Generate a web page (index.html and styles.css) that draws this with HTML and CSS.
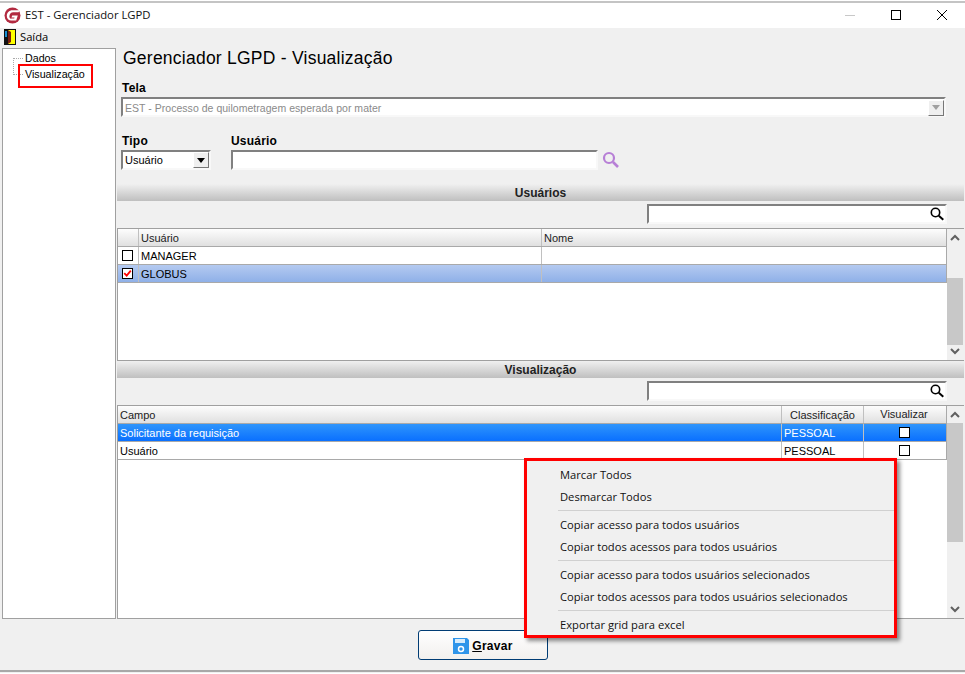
FILE: index.html
```html
<!DOCTYPE html>
<html lang="pt-BR">
<head>
<meta charset="utf-8">
<title>EST - Gerenciador LGPD</title>
<link rel="stylesheet" href="styles.css">
</head>
<body>
<div class="window">
  <header class="titlebar">
    <svg class="logo" width="17" height="17" viewBox="0 0 17 17"><circle cx="8.500" cy="8.500" r="8" fill="#b22a40"/><path d="M16 3.200H8.500C5 3.200 2.800 5.700 2.800 8.800c0 2.800 1.800 4.800 4.400 4.800h5l1.600-5.200H8.200l-.7 2.100h3l-.3 1.100H7.800C6 12.200 5.200 10.500 5.400 9 5.700 6.800 7 5.200 9.200 5.200h5.300z" fill="#fff"/></svg>
    <span class="app-title">EST - Gerenciador LGPD</span>
    <div class="win-buttons">
      <svg width="12" height="12" viewBox="0 0 12 12"><path d="M1 6.500h10" stroke="#c8c8c8"/></svg>
      <svg width="12" height="12" viewBox="0 0 12 12"><rect x="1.500" y="1.500" width="9" height="9" fill="none" stroke="#000"/></svg>
      <svg width="12" height="12" viewBox="0 0 12 12"><path d="M1 1l10 10M11 1L1 11" stroke="#000"/></svg>
    </div>
  </header>
  <nav class="menubar">
    <svg width="12" height="16" viewBox="0 0 12 16"><rect width="12" height="16" fill="#111"/><rect x="4" y="1" width="7" height="14" fill="#ffff00"/><path d="M4 1l3 2v10l-3 2z" fill="#7a1d10"/><rect x="1" y="2" width="2" height="6" fill="#1b8fd0"/></svg>
    <span>Saída</span>
  </nav>
  <div class="content">
    <aside class="tree">
      <div class="tree-lines"></div>
      <div class="tree-item">Dados</div>
      <div class="tree-item">Visualização</div>
    </aside>
    <main class="main">
      <div class="form">
        <h1>Gerenciador LGPD - Visualização</h1>
        <label class="lbl lbl-tela">Tela</label>
        <div class="field field-tela">
          <span>EST - Processo de quilometragem esperada por mater</span>
          <span class="drop disabled"><i></i></span>
        </div>
        <div class="form-row">
          <div class="col-tipo">
            <label class="lbl">Tipo</label>
            <div class="field field-tipo"><span>Usuário</span><span class="drop"><i></i></span></div>
          </div>
          <div class="col-user">
            <label class="lbl">Usuário</label>
            <div class="user-line">
              <div class="field field-user"></div>
              <svg width="20" height="20" viewBox="0 0 20 20"><circle cx="8" cy="8" r="5" fill="none" stroke="#b77fd6" stroke-width="2.200"/><path d="M12 12l5 5" stroke="#b77fd6" stroke-width="2.600"/></svg>
            </div>
          </div>
        </div>
      </div>

      <div class="band">Usuários</div>
      <div class="search-row">
        <div class="search"><svg width="16" height="16" viewBox="0 0 16 16"><circle cx="6.500" cy="6.500" r="4.200" fill="none" stroke="#000" stroke-width="1.600"/><path d="M9.800 9.800l4.500 4" stroke="#000" stroke-width="2"/></svg></div>
      </div>
      <section class="grid grid-users">
        <div class="grid-body">
          <div class="row head">
            <div class="c c-check"></div><div class="c c-user">Usuário</div><div class="c c-name">Nome</div>
          </div>
          <div class="row">
            <div class="c c-check"><span class="box"></span></div><div class="c c-user">MANAGER</div><div class="c c-name"></div>
          </div>
          <div class="row sel-soft">
            <div class="c c-check"><span class="box checked"><svg width="11" height="11" viewBox="0 0 11 11"><path d="M1.500 5l3 3 5-6" fill="none" stroke="#f00" stroke-width="2.200"/></svg></span></div><div class="c c-user">GLOBUS</div><div class="c c-name"></div>
          </div>
        </div>
        <div class="scrollbar sb-users">
          <svg class="arrow" width="16" height="17" viewBox="0 0 16 17"><path d="M4 11l4-4 4 4" fill="none" stroke="#606060" stroke-width="2"/></svg>
          <div class="track"><div class="thumb"></div></div>
          <svg class="arrow" width="16" height="17" viewBox="0 0 16 17"><path d="M4 6l4 4 4-4" fill="none" stroke="#606060" stroke-width="2"/></svg>
        </div>
      </section>

      <div class="band">Visualização</div>
      <div class="search-row">
        <div class="search"><svg width="16" height="16" viewBox="0 0 16 16"><circle cx="6.500" cy="6.500" r="4.200" fill="none" stroke="#000" stroke-width="1.600"/><path d="M9.800 9.800l4.500 4" stroke="#000" stroke-width="2"/></svg></div>
      </div>
      <section class="grid grid-view">
        <div class="grid-body">
          <div class="row head">
            <div class="c c-campo">Campo</div><div class="c c-class center">Classificação</div><div class="c c-vis center">Visualizar</div>
          </div>
          <div class="row sel-strong">
            <div class="c c-campo">Solicitante da requisição</div><div class="c c-class">PESSOAL</div><div class="c c-vis center"><span class="box"></span></div>
          </div>
          <div class="row">
            <div class="c c-campo">Usuário</div><div class="c c-class">PESSOAL</div><div class="c c-vis center"><span class="box"></span></div>
          </div>
        </div>
        <div class="scrollbar sb-view">
          <svg class="arrow" width="16" height="17" viewBox="0 0 16 17"><path d="M4 11l4-4 4 4" fill="none" stroke="#606060" stroke-width="2"/></svg>
          <div class="track"><div class="thumb"></div></div>
          <svg class="arrow" width="16" height="17" viewBox="0 0 16 17"><path d="M4 6l4 4 4-4" fill="none" stroke="#606060" stroke-width="2"/></svg>
        </div>
      </section>
    </main>
  </div>
  <footer class="footer">
    <button class="save">
      <svg width="16" height="16" viewBox="0 0 16 16"><path d="M0 0h14l2 2v14H0z" fill="#2f95ea"/><rect x="2" y="1" width="10" height="4" fill="#d8ecfb"/><circle cx="8" cy="11" r="2.500" fill="none" stroke="#fff" stroke-width="1.500"/></svg>
      <span><u>G</u>ravar</span>
    </button>
  </footer>
  <div class="annot-tree"></div>
  <div class="menu">
    <div class="mi">Marcar Todos</div>
    <div class="mi">Desmarcar Todos</div>
    <hr>
    <div class="mi">Copiar acesso para todos usuários</div>
    <div class="mi">Copiar todos acessos para todos usuários</div>
    <hr>
    <div class="mi">Copiar acesso para todos usuários selecionados</div>
    <div class="mi">Copiar todos acessos para todos usuários selecionados</div>
    <hr>
    <div class="mi">Exportar grid para excel</div>
  </div>
</div>
</body>
</html>
```
FILE: styles.css
```css
* { box-sizing: border-box; }
html, body { margin: 0; padding: 0; }
body { width: 965px; height: 674px; overflow: hidden; background: #fff; font-family: "Liberation Sans", sans-serif; font-size: 11px; color: #000; }
.window { position: relative; width: 965px; height: 674px; display: flex; flex-direction: column; padding: 2px 0 3px 2px; background: #f0f0f0; border-bottom: 1px solid #fff; }
.window::before { content: ""; position: absolute; left: 0; right: 0; top: 0; height: 3px; background: linear-gradient(#fff 33%, #c4c4c4 33%); }
.window::after { content: ""; position: absolute; left: 0; right: 0; bottom: 1px; height: 2px; background: #a8a8a8; }

.titlebar { height: 26px; margin-left: -2px; background: #fff; display: flex; align-items: center; padding: 0 0 1px 4px; font-family: "Open Sans", sans-serif; font-size: 11.300px; }
.logo { margin: 1px 4px 0 0; }
.app-title { color: #111; }
.win-buttons { margin: 1px 0 0 auto; display: flex; gap: 34px; padding-right: 17px; }

.menubar { height: 20px; display: flex; align-items: center; gap: 4px; padding: 0 0 2px 2px; font-family: "Open Sans", sans-serif; font-size: 11.200px; }
.menubar span { margin-bottom: 2px; }

.content { height: 571px; display: flex; }
.tree { position: relative; width: 114px; height: 571px; background: #fff; border: 1px solid #a0a0a0; padding-top: 2px; font-size: 10.700px; }
.tree-item { height: 16px; line-height: 14px; padding-left: 22px; }
.tree-lines { position: absolute; left: 10px; top: 9px; width: 10px; height: 17px; border-left: 1px dotted #aaa; border-top: 1px dotted #aaa; border-bottom: 1px dotted #aaa; }

.main { width: 847px; margin-left: 1px; display: flex; flex-direction: column; }
.form { height: 136px; padding: 0 0 0 4px; }
h1 { margin: 0; height: 33px; padding: 0 0 0 2px; font: 400 17.500px/20px "Liberation Sans", sans-serif; letter-spacing: .24px; }
.lbl { display: block; font: 700 12px/14px "Liberation Sans", sans-serif; padding-left: 1px; letter-spacing: .2px; }
.lbl-tela { height: 16px; }
.field { height: 20px; background: #fff; border: 2px solid; border-color: #808080 #f8f8f8 #f8f8f8 #808080; display: flex; align-items: center; justify-content: space-between; padding-left: 2px; position: relative; font-size: 11px; }
.field-tela { width: 825px; color: #8a8a8a; font-size: 10.500px; letter-spacing: .03px; padding-top: 1px; }
.drop { width: 16px; height: 16px; background: #efefef; border: 1px solid; border-color: #fff #777 #777 #fff; display: flex; align-items: center; justify-content: center; }
.drop i { width: 0; height: 0; border: 4px solid transparent; border-top: 5px solid #000; border-bottom: 0; }
.drop.disabled i { border-top-color: #a0a0a0; }
.form-row { display: flex; margin-top: 17px; }
.col-tipo { width: 110px; }
.col-tipo .lbl, .col-user .lbl { height: 16px; }
.field-tipo { width: 90px; font-size: 11px; }
.col-user .lbl { padding-left: 0; }
.user-line { display: flex; align-items: center; gap: 3px; }
.field-user { width: 367px; }

.band { height: 17px; padding-top: 1px; background: linear-gradient(#f0f0f0 0%, #bfbfbf 100%); text-align: center; font: 700 12px/17px "Liberation Sans", sans-serif; color: #222; overflow: hidden; }
.search-row { height: 27px; padding: 3px 17px 0 0; display: flex; justify-content: flex-end; }
.search { width: 300px; height: 20px; background: #fff; border: 2px solid; border-color: #808080 #f8f8f8 #f8f8f8 #808080; display: flex; justify-content: flex-end; align-items: center; }

.grid { display: flex; border: 1px solid #a0a0a0; border-right: 0; background: #fff; font-size: 11px; }
.grid-users { height: 133px; }
.grid-view { height: 214px; }
.grid-body { width: 829px; flex: none; display: flex; flex-direction: column; }
.row { display: flex; height: 18px; border-bottom: 1px solid #a9a9a9; border-right: 1px solid #a9a9a9; line-height: 19px; }
.row.head { background: linear-gradient(#fdfdfd, #e0e0e0); color: #222; }
.c { height: 100%; padding-left: 2px; border-right: 1px solid #c0c0c0; white-space: nowrap; overflow: hidden; }
.c:last-child { border-right: 0; }
.center { text-align: center; padding-left: 0; }
.c-check { width: 21px; padding: 0 1px 0 0; display: flex; align-items: center; justify-content: center; }
.c-user { width: 403px; }
.c-name { flex: 1; }
.c-campo { width: 664px; }
.c-class { width: 82px; }
.c-vis { flex: 1; display: flex; align-items: center; justify-content: center; padding-right: 2px; }
.box { width: 11px; height: 11px; background: #fff; border: 1px solid #000; display: inline-flex; align-items: center; justify-content: center; }
.sel-soft { background: linear-gradient(#b4caf0, #8fb0e8); }
.sel-strong { background: linear-gradient(#2f95fb, #0a70ff); color: #fff; }
.scrollbar { width: 17px; background: #f0f0f0; display: flex; flex-direction: column; }
.arrow { flex: none; }
.track { flex: 1; position: relative; }
.thumb { position: absolute; left: 0; right: 1px; background: #c8c8c8; }
.sb-users .thumb { top: 32px; height: 67px; }
.sb-view .thumb { top: 0; height: 119px; }

.footer { flex: 1; display: flex; justify-content: center; padding: 11px 1px 0 0; }
.save { width: 130px; height: 30px; background: linear-gradient(#fff, #f2f0ee); border: 1px solid #003c74; border-radius: 3px; display: flex; align-items: center; justify-content: center; gap: 3px; font: 700 12px "Liberation Sans", sans-serif; letter-spacing: .3px; padding: 1px 0 0; color: #000; }

.annot-tree { position: absolute; left: 18px; top: 64px; width: 75px; height: 24px; border: 2px solid #f00; }
.menu { position: absolute; left: 524px; top: 458px; width: 373px; height: 180px; padding: 3px 0 0; background: #f0f0f0; border: 3px solid #f00; box-shadow: 3px 3px 4px rgba(0,0,0,.45); font-family: "Open Sans", sans-serif; font-size: 11.200px; color: #111; }
.mi { height: 22px; line-height: 22px; padding-left: 33px; }
.menu hr { margin: 2px 0 3px 31px; border: 0; border-top: 1px solid #d0d0d0; height: 1px; }
```
